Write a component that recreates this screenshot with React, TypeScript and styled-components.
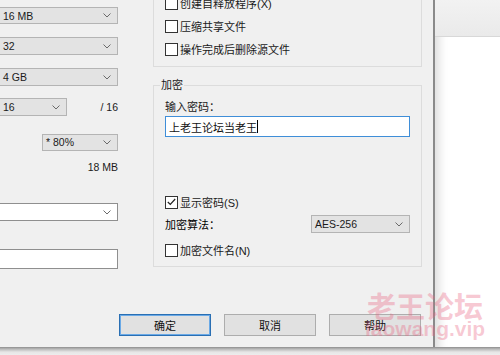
import styled, { createGlobalStyle } from 'styled-components';

const GlobalStyle = createGlobalStyle`
  html, body {
    margin: 0;
    padding: 0;
  }
  body {
    width: 500px;
    height: 355px;
    overflow: hidden;
    background: #fff;
    font-family: "Liberation Sans", "Noto Sans CJK SC", sans-serif;
    font-size: 11px;
    color: #000;
  }
`;

const Screen = styled.div`
  position: relative;
  width: 500px;
  height: 355px;
  display: flex;
  flex-direction: column;
  overflow: hidden;
  background: #ececec;
`;

const TopRow = styled.div`
  display: flex;
  height: 347px;
`;

const Dialog = styled.div`
  width: 433px;
  flex-shrink: 0;
  background: #f0f0f0;
  display: flex;
  flex-direction: column;
  border-right: 2px solid #8a8a8a;
`;

const Backdrop = styled.div`
  flex: 1;
  display: flex;
  flex-direction: column;
  background: #fff;
  box-shadow: inset 12px 0 10px -8px rgba(0, 0, 0, 0.14);
`;

const BackdropBar = styled.div`
  height: 36px;
  background: linear-gradient(#f2f2f2, #eaeaea);
  border-bottom: 1px solid #d8d8d8;
`;

const BottomShade = styled.div`
  flex: 1;
  background: linear-gradient(#8d8d8d 0, #b8b8b8 2px, #e6e6e6 5px, #ededed 100%);
`;

const Body = styled.div`
  display: flex;
  height: 300px;
`;

const LeftColumn = styled.div`
  margin-left: -1px;
  width: 119px;
  display: flex;
  flex-direction: column;
`;

const RightColumn = styled.div`
  margin-left: 35px;
  width: 269px;
  display: flex;
  flex-direction: column;
`;

const Select = styled.div<{ $top?: number; $width?: number; $white?: boolean; $height?: number }>`
  box-sizing: border-box;
  margin-top: ${(p) => p.$top ?? 0}px;
  width: ${(p) => (p.$width ? `${p.$width}px` : '100%')};
  height: ${(p) => p.$height ?? 18}px;
  flex-shrink: 0;
  display: flex;
  align-items: center;
  justify-content: space-between;
  padding: 0 6px 0 3px;
  background: ${(p) => (p.$white ? '#fff' : '#e3e3e3')};
  border: 1px solid ${(p) => (p.$white ? '#8f8f8f' : '#b4b4b4')};
  font-size: 10.5px;
  color: #1a1a1a;
`;

const Chevron = () => (
  <svg width="8" height="5" viewBox="0 0 8 5">
    <polyline points="0.5,0.5 4,4 7.5,0.5" fill="none" stroke="#6a6a6a" strokeWidth="1" />
  </svg>
);

const SplitRow = styled.div<{ $top: number }>`
  margin-top: ${(p) => p.$top}px;
  display: flex;
  align-items: center;
  justify-content: space-between;
  height: 18px;
`;

const Hint = styled.span`
  font-size: 10.5px;
  color: #1a1a1a;
`;

const Size = styled.div<{ $top: number }>`
  margin-top: ${(p) => p.$top}px;
  height: 14px;
  line-height: 14px;
  text-align: right;
  font-size: 10.5px;
  color: #1a1a1a;
`;

const TextField = styled.div<{ $top: number }>`
  box-sizing: border-box;
  margin-top: ${(p) => p.$top}px;
  height: 20px;
  background: #fff;
  border: 1px solid #8f8f8f;
`;

const TopGroup = styled.div`
  box-sizing: border-box;
  margin-top: -20px;
  height: 87px;
  border: 1px solid #dcdcdc;
  border-top: none;
  padding: 15px 11px 0;
  display: flex;
  flex-direction: column;
  gap: 7px;
`;

const Group = styled.fieldset`
  box-sizing: border-box;
  margin: 10px 0 0;
  height: 190px;
  border: 1px solid #dcdcdc;
  padding: 0 11px;
  display: flex;
  flex-direction: column;

  legend {
    margin-left: -5px;
    padding: 0 1px;
    height: 16px;
    line-height: 16px;
    color: #1a1a1a;
  }
`;

const CheckRow = styled.label<{ $top?: number }>`
  margin-top: ${(p) => p.$top ?? 0}px;
  height: 16px;
  display: flex;
  align-items: center;
  gap: 2px;
  color: #1a1a1a;
`;

const Box = styled.span`
  box-sizing: border-box;
  width: 13px;
  height: 13px;
  border: 1px solid #333;
  background: #fff;
  display: flex;
  align-items: center;
  justify-content: center;
`;

const Label = styled.div<{ $top: number }>`
  margin-top: ${(p) => p.$top}px;
  height: 14px;
  line-height: 14px;
  color: #1a1a1a;
`;

const Password = styled.div`
  box-sizing: border-box;
  margin-top: 2px;
  width: 245px;
  height: 21px;
  background: #fff;
  border: 1px solid #3f8ed8;
  display: flex;
  align-items: center;
  padding-left: 3px;
  color: #111;
`;

const Caret = styled.span`
  display: inline-block;
  width: 1px;
  height: 13px;
  background: #000;
`;

const AlgoRow = styled.div`
  margin-top: 5px;
  width: 245px;
  display: flex;
  align-items: center;
  justify-content: space-between;
`;

const Footer = styled.div`
  display: flex;
  justify-content: flex-end;
  gap: 13px;
  padding: 14px 12px 0 0;
`;

const Button = styled.div<{ $primary?: boolean }>`
  box-sizing: border-box;
  width: 92px;
  height: 22px;
  display: flex;
  align-items: center;
  justify-content: center;
  background: #e1e1e1;
  border: 1px solid ${(p) => (p.$primary ? '#2a6fb3' : '#adadad')};
  box-shadow: ${(p) => (p.$primary ? 'inset 0 0 0 1px #6aa9e6' : 'none')};
  color: #111;
`;

const Watermark = styled.div`
  position: absolute;
  left: 365px;
  top: 290px;
  display: flex;
  flex-direction: column;
  align-items: center;
  color: rgba(233, 98, 128, 0.34);
  font-weight: bold;
  pointer-events: none;

  span:first-child {
    font-family: "Noto Sans CJK SC", sans-serif;
    font-size: 29px;
    line-height: 30px;
  }
  span:last-child {
    font-family: "Liberation Sans", sans-serif;
    font-size: 21px;
    line-height: 22px;
    margin-top: -2px;
  }
`;

const Check = ({ checked }: { checked?: boolean }) => (
  <Box>
    {checked && (
      <svg width="9" height="8" viewBox="0 0 9 8">
        <polyline points="0.8,4 3.3,6.5 8.2,1" fill="none" stroke="#222" strokeWidth="1.2" />
      </svg>
    )}
  </Box>
);

export default function App() {
  return (
    <Screen>
      <GlobalStyle />
      <TopRow>
        <Dialog>
          <Body>
            <LeftColumn>
              <Select $top={7} $height={17}>
                <span>16 MB</span>
                <Chevron />
              </Select>
              <Select $top={13}>
                <span>32</span>
                <Chevron />
              </Select>
              <Select $top={13}>
                <span>4 GB</span>
                <Chevron />
              </Select>
              <SplitRow $top={12}>
                <Select $width={68}>
                  <span>16</span>
                  <Chevron />
                </Select>
                <Hint>/ 16</Hint>
              </SplitRow>
              <SplitRow $top={17}>
                <span />
                <Select $width={76} $height={17}>
                  <span>* 80%</span>
                  <Chevron />
                </Select>
              </SplitRow>
              <Size $top={9}>18 MB</Size>
              <Select $top={29} $white>
                <span />
                <Chevron />
              </Select>
              <TextField $top={28} />
            </LeftColumn>
            <RightColumn>
              <TopGroup>
                <CheckRow>
                  <Check />
                  创建自释放程序(X)
                </CheckRow>
                <CheckRow>
                  <Check />
                  压缩共享文件
                </CheckRow>
                <CheckRow>
                  <Check />
                  操作完成后删除源文件
                </CheckRow>
              </TopGroup>
              <Group>
                <legend>加密</legend>
                <Label $top={7}>输入密码：</Label>
                <Password>
                  上老王论坛当老王
                  <Caret />
                </Password>
                <CheckRow $top={57}>
                  <Check checked />
                  显示密码(S)
                </CheckRow>
                <AlgoRow>
                  <span>加密算法：</span>
                  <Select $width={99}>
                    <span>AES-256</span>
                    <Chevron />
                  </Select>
                </AlgoRow>
                <CheckRow $top={9}>
                  <Check />
                  加密文件名(N)
                </CheckRow>
              </Group>
            </RightColumn>
          </Body>
          <Footer>
            <Button $primary>确定</Button>
            <Button>取消</Button>
            <Button>帮助</Button>
          </Footer>
        </Dialog>
        <Backdrop>
          <BackdropBar />
        </Backdrop>
      </TopRow>
      <BottomShade />
      <Watermark>
        <span>老王论坛</span>
        <span>laowang.vip</span>
      </Watermark>
    </Screen>
  );
}
